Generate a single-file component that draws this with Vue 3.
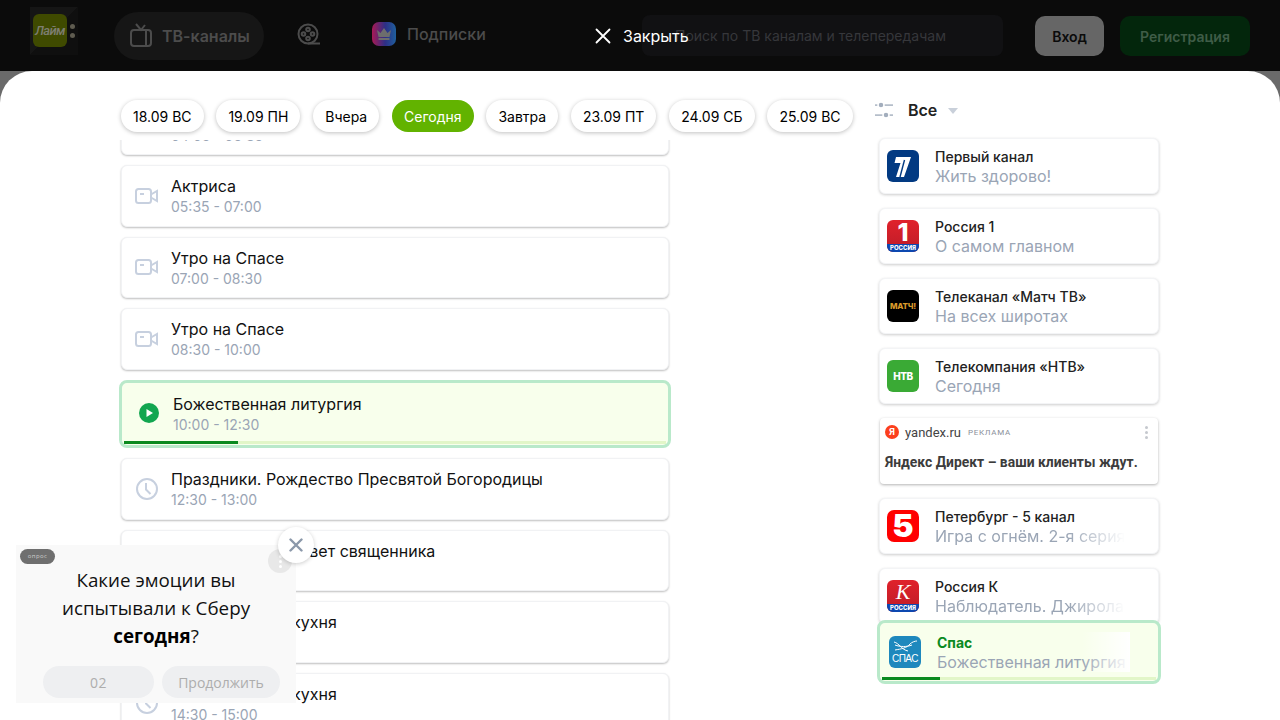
<template>
  <div class="page">
    <header class="topbar">
      <div class="logo">
        <div class="logo-mark">Лайм</div>
        <div class="logo-dots"><i></i><i></i></div>
      </div>
      <nav class="nav">
        <a class="nav-item nav-active">
          <svg width="22" height="26" viewBox="0 0 22 26" fill="none" stroke="#4c4c4c" stroke-width="2">
            <rect x="1" y="7" width="20" height="16" rx="3" />
            <path d="M6 1l5 6 4-5" />
            <path d="M16 7v16" />
          </svg>
          <span>ТВ-каналы</span>
        </a>
        <a class="nav-reel">
          <svg width="24" height="24" viewBox="0 0 24 24" fill="none" stroke="#4c4c4c" stroke-width="2">
            <circle cx="11" cy="11" r="9.5" />
            <circle cx="11" cy="6.5" r="1.8" />
            <circle cx="11" cy="15.5" r="1.8" />
            <circle cx="6.5" cy="11" r="1.8" />
            <circle cx="15.5" cy="11" r="1.8" />
            <path d="M11 20.5h12" />
          </svg>
        </a>
        <a class="nav-subs">
          <span class="subs-icon">
            <svg width="16" height="14" viewBox="0 0 16 14" fill="#6d6d6d">
              <path d="M1 3l3.5 3L8 1l3.5 5L15 3l-1.5 7h-11z" />
              <rect x="2.5" y="11" width="11" height="2" />
            </svg>
          </span>
          <span>Подписки</span>
        </a>
      </nav>
      <div class="search">Поиск по ТВ каналам и телепередачам</div>
      <button class="btn-login">Вход</button>
      <button class="btn-register">Регистрация</button>
    </header>

    <div class="close-top">
      <svg width="16" height="16" viewBox="0 0 16 16" stroke="#fff" stroke-width="1.8" stroke-linecap="round">
        <path d="M1.5 1.5l13 13M14.5 1.5l-13 13" />
      </svg>
      <span>Закрыть</span>
    </div>

    <main class="sheet">
      <section class="schedule">
        <div class="dates">
          <button v-for="d in dates" :key="d" class="date" :class="{ today: d === 'Сегодня' }">{{ d }}</button>
        </div>
        <div class="programs">
          <div class="programs-inner">
            <div v-for="p in programs" :key="p.time" class="program" :class="{ live: p.live }">
              <svg v-if="p.live" width="20" height="20" viewBox="0 0 20 20">
                <circle cx="10" cy="10" r="10" fill="#12a650" />
                <path d="M7.5 6l6.5 4-6.5 4z" fill="#fff" />
              </svg>
              <svg v-else-if="p.clock" width="24" height="24" viewBox="0 0 24 24" fill="none" stroke="#c7d0df" stroke-width="2">
                <circle cx="12" cy="12" r="10" />
                <path d="M11 6v6.5l4.5 4.5" />
              </svg>
              <svg v-else width="24" height="24" viewBox="0 0 24 24" fill="none" stroke="#c7d0df" stroke-width="2">
                <rect x="1" y="5" width="15" height="14" rx="2.5" />
                <path d="M5 10h4" />
                <path d="M16 10.5l6-3.5v10l-6-3.5" />
              </svg>
              <div class="program-text">
                <div class="program-title">{{ p.title }}</div>
                <div class="program-time">{{ p.time }}</div>
              </div>
              <div v-if="p.live" class="progress"><div class="progress-done" style="width: 21%"></div></div>
            </div>
          </div>
        </div>
      </section>

      <aside class="channels">
        <div class="filter">
          <svg width="18" height="16" viewBox="0 0 18 16" fill="#a3aebd">
            <rect x="0" y="2.4" width="18" height="1.4" />
            <rect x="0" y="12.4" width="18" height="1.4" />
            <circle cx="6" cy="3" r="3" stroke="#fff" stroke-width="1.5" />
            <circle cx="11" cy="13" r="3" stroke="#fff" stroke-width="1.5" />
          </svg>
          <span class="filter-label">Все</span>
          <span class="filter-caret"></span>
        </div>

        <div v-for="c in channels" :key="c.name" class="channel" :class="{ ad: c.ad }">
          <template v-if="c.ad">
            <div class="ad-head">
              <span class="ya-icon">Я</span>
              <span class="ad-host">yandex.ru</span>
              <span class="ad-tag">РЕКЛАМА</span>
              <span class="ad-more"><i></i><i></i><i></i></span>
            </div>
            <div class="ad-text">Яндекс Директ – ваши клиенты ждут.</div>
          </template>
          <template v-else>
            <div class="channel-logo" :class="c.logo">
              <svg v-if="c.logo === 'first'" width="32" height="32" viewBox="0 0 32 32">
                <path d="M9 7h15l-7 20H9l4.5-14H7.5z" fill="#fff" />
                <path d="M17.5 10L13 27" stroke="#023a82" stroke-width="1.4" fill="none" />
              </svg>
              <span v-if="c.logo === 'russia1'" class="logo-big">1</span>
              <span v-if="c.logo === 'kultura'" class="logo-k">К</span>
              <span v-if="c.logo === 'match'" class="logo-match">МАТЧ!</span>
              <span v-if="c.logo === 'ntv'" class="logo-ntv">НТВ</span>
              <span v-if="c.logo === 'five'" class="logo-five">5</span>
              <span v-if="c.logo === 'russia1' || c.logo === 'kultura'" class="logo-strip">РОССИЯ</span>
            </div>
            <div class="channel-text">
              <div class="channel-name">{{ c.name }}</div>
              <div class="channel-sub" :class="{ fade: c.fade }">{{ c.sub }}</div>
            </div>
          </template>
        </div>

        <div class="channel channel-live">
          <div class="channel-logo spas">
            <svg width="26" height="13" viewBox="0 0 26 13" fill="none" stroke="#fff" stroke-width="1">
              <path d="M2 2c5 1 8 8 14 9" />
              <path d="M3 10c6-1 12-2 15-6 2-2 5-3 7-3" />
              <path d="M3 5c5 2 12 2 17 0" />
            </svg>
            <span>СПАС</span>
          </div>
          <div class="channel-text">
            <div class="channel-name">Спас</div>
            <div class="channel-sub">Божественная литургия</div>
          </div>
          <div class="live-fade"></div>
          <div class="progress"><div class="progress-done" style="width: 21%"></div></div>
        </div>
      </aside>
    </main>

    <div class="poll">
      <span class="poll-badge">опрос</span>
      <span class="poll-menu"><i></i><i></i><i></i></span>
      <div class="poll-title">Какие эмоции вы<br />испытывали к Сберу<br /><b>сегодня</b>?</div>
      <div class="poll-actions">
        <button class="poll-btn poll-count">02</button>
        <button class="poll-btn poll-next">Продолжить</button>
      </div>
      <button class="poll-close">
        <svg width="14" height="14" viewBox="0 0 14 14" stroke="#8b98aa" stroke-width="2.4" stroke-linecap="round">
          <path d="M1.5 1.5l11 11M12.5 1.5l-11 11" />
        </svg>
      </button>
    </div>
  </div>
</template>

<script setup>
const dates = ['18.09 ВС', '19.09 ПН', 'Вчера', 'Сегодня', 'Завтра', '23.09 ПТ', '24.09 СБ', '25.09 ВС']

const programs = [
  { title: 'Утро на Спасе', time: '04:05 - 05:35' },
  { title: 'Актриса', time: '05:35 - 07:00' },
  { title: 'Утро на Спасе', time: '07:00 - 08:30' },
  { title: 'Утро на Спасе', time: '08:30 - 10:00' },
  { title: 'Божественная литургия', time: '10:00 - 12:30', live: true },
  { title: 'Праздники. Рождество Пресвятой Богородицы', time: '12:30 - 13:00', clock: true },
  { title: 'Православный ответ священника', time: '13:00 - 14:00', clock: true },
  { title: 'Монастырская кухня', time: '14:00 - 14:30', clock: true },
  { title: 'Монастырская кухня', time: '14:30 - 15:00', clock: true }
]

const channels = [
  { name: 'Первый канал', sub: 'Жить здорово!', logo: 'first' },
  { name: 'Россия 1', sub: 'О самом главном', logo: 'russia1' },
  { name: 'Телеканал «Матч ТВ»', sub: 'На всех широтах', logo: 'match' },
  { name: 'Телекомпания «НТВ»', sub: 'Сегодня', logo: 'ntv' },
  { name: 'ad', ad: true },
  { name: 'Петербург - 5 канал', sub: 'Игра с огнём. 2-я серия', logo: 'five', fade: true },
  { name: 'Россия К', sub: 'Наблюдатель. Джироламо Фрескобальди', logo: 'kultura', fade: true }
]
</script>

<style>
html,
body {
  margin: 0;
  overflow: hidden;
}
</style>

<style scoped>
.page {
  position: relative;
  width: 1280px;
  height: 720px;
  overflow: hidden;
  background: #6a6a6a;
  font-family: Inter, "Noto Sans", sans-serif;
  color: #000;
}

button {
  border: none;
  font-family: inherit;
  padding: 0;
}

/* header */
.topbar {
  height: 71px;
  box-sizing: border-box;
  padding: 7px 30px 0;
  background: #0b0b0b;
  display: flex;
  align-items: flex-start;
}

.logo {
  width: 48px;
  height: 48px;
  margin-right: 36px;
  padding: 7px 0 0 3px;
  box-sizing: border-box;
  background: linear-gradient(135deg, #151515 50%, #0f0f0f 50%);
  display: flex;
  gap: 3px;
}

.logo-mark {
  width: 34px;
  height: 33px;
  border-radius: 6px;
  background: #3f4a00;
  color: #7d7d70;
  font-family: Roboto, sans-serif;
  font-size: 13px;
  font-style: italic;
  font-weight: 500;
  line-height: 33px;
  text-align: center;
  letter-spacing: -0.6px;
}

.logo-dots {
  display: flex;
  flex-direction: column;
  gap: 4px;
  padding-top: 10px;
}

.logo-dots i {
  width: 5px;
  height: 5px;
  border-radius: 50%;
  background: #5f5c50;
}

.nav {
  display: flex;
  align-items: center;
  height: 48px;
  margin-top: 5px;
  color: #4c4c4c;
  font-size: 16px;
}

.nav-item {
  display: flex;
  align-items: center;
  gap: 10px;
  width: 150px;
  height: 48px;
  box-sizing: border-box;
  padding-left: 16px;
  border-radius: 24px;
  background: #161616;
  font-weight: 600;
}

.nav-reel {
  display: flex;
  margin-left: 33px;
  margin-top: -2px;
}

.nav-subs {
  display: flex;
  align-items: center;
  gap: 11px;
  margin-left: 51px;
  margin-top: -4px;
  font-weight: 500;
}

.subs-icon {
  width: 24px;
  height: 24px;
  border-radius: 7px;
  background: linear-gradient(90deg, #a81a55, #2d2f86 55%, #1f5f9c);
  display: flex;
  align-items: center;
  justify-content: center;
}

.search {
  position: absolute;
  left: 642px;
  top: 15px;
  width: 361px;
  height: 41px;
  box-sizing: border-box;
  padding-left: 33px;
  border-radius: 8px;
  background: #111113;
  color: #36373b;
  font-size: 14px;
  line-height: 41px;
}

.btn-login,
.btn-register {
  position: absolute;
  top: 16px;
  height: 40px;
  border-radius: 10px;
  font-size: 14px;
  font-weight: 600;
}

.btn-login {
  left: 1035px;
  width: 69px;
  background: #666;
  color: #0b0b0b;
}

.btn-register {
  left: 1120px;
  width: 130px;
  background: #03260c;
  color: #3f5c47;
}

.close-top {
  position: absolute;
  left: 595px;
  top: 26px;
  display: flex;
  align-items: center;
  gap: 12px;
  color: #fff;
  font-size: 16px;
  line-height: 20px;
}

/* sheet */
.sheet {
  height: 649px;
  box-sizing: border-box;
  padding: 29px 120px 0 121px;
  background: #fff;
  border-radius: 32px 32px 0 0;
  display: flex;
  gap: 210px;
}

.schedule {
  width: 548px;
  flex: none;
}

.dates {
  display: flex;
  gap: 12.85px;
  width: 760px;
}

.date {
  height: 32px;
  padding: 0 12px;
  border-radius: 16px;
  background: #fff;
  box-shadow: 0 1px 4px rgba(0, 0, 0, 0.25);
  font-size: 14px;
  color: #000;
  white-space: nowrap;
}

.date.today {
  background: #62b300;
  color: #fff;
  box-shadow: none;
}

.programs {
  height: 580px;
  margin: 8px -6px 0;
  padding: 0 6px;
  overflow: hidden;
}

.programs-inner {
  margin-top: -46.5px;
  display: flex;
  flex-direction: column;
  gap: 10px;
}

.program {
  position: relative;
  height: 61.5px;
  flex: none;
  box-sizing: border-box;
  border: 1px solid #f1f2f4;
  border-radius: 6px;
  padding-left: 13px;
  background: #fff;
  box-shadow: 0 1px 2px rgba(0, 0, 0, 0.25);
  display: flex;
  align-items: center;
  gap: 12px;
}

.program-title {
  font-size: 16px;
  line-height: 22px;
  color: #111;
}

.program-time {
  margin-top: 1px;
  font-size: 14px;
  line-height: 18px;
  color: #9aa5b5;
}

.program.live {
  height: 68.5px;
  margin: 0 -2px;
  border: 3px solid #b9e9ca;
  border-radius: 8px;
  padding-left: 17px;
  padding-bottom: 1px;
  background: #f8ffec;
  box-shadow: none;
  gap: 14px;
}

.progress {
  position: absolute;
  left: 2px;
  right: 2px;
  bottom: 1px;
  height: 3px;
  background: #e2f6c8;
}

.progress-done {
  height: 100%;
  background: #0a8a1f;
}

/* channels */
.channels {
  position: relative;
  width: 280px;
  flex: none;
  height: 100%;
}

.filter {
  height: 18px;
  margin: 1px 0 0 -4px;
  display: flex;
  align-items: center;
}

.filter-label {
  margin-left: 15px;
  font-size: 16px;
  font-weight: 600;
  color: #222;
}

.filter-caret {
  width: 0;
  height: 0;
  margin: 2px 0 0 11px;
  border-left: 5px solid transparent;
  border-right: 5px solid transparent;
  border-top: 6px solid #c9d0da;
}

.channel {
  position: relative;
  height: 56px;
  box-sizing: border-box;
  margin-top: 14px;
  padding-left: 7px;
  border: 1px solid #f3f4f6;
  border-radius: 6px;
  background: #fff;
  box-shadow: 0 1px 3px rgba(0, 0, 0, 0.2);
  display: flex;
  align-items: center;
  gap: 16px;
}

.filter + .channel {
  margin-top: 19px;
}

.channel-logo {
  position: relative;
  width: 32px;
  height: 32px;
  flex: none;
  border-radius: 6px;
  overflow: hidden;
  display: flex;
  align-items: center;
  justify-content: center;
  color: #fff;
}

.channel-logo.first {
  background: #023a82;
}

.channel-logo.russia1,
.channel-logo.kultura {
  background: linear-gradient(#e0222b, #bd1c28);
  padding-bottom: 8px;
  box-sizing: border-box;
}

.logo-big {
  font-size: 25px;
  font-weight: 800;
  line-height: 24px;
}

.logo-k {
  font-family: "Liberation Serif", serif;
  font-style: italic;
  font-size: 22px;
  line-height: 24px;
}

.logo-strip {
  position: absolute;
  left: 0;
  right: 0;
  bottom: 0;
  height: 8px;
  background: #0d48b0;
  font-size: 6px;
  font-weight: 800;
  line-height: 8px;
  text-align: center;
}

.channel-logo.match {
  background: #000;
}

.logo-match {
  font-size: 8px;
  font-weight: 800;
  color: #d99a2b;
  letter-spacing: -0.2px;
}

.channel-logo.ntv {
  background: #3aaa35;
}

.logo-ntv {
  font-size: 10px;
  font-weight: 800;
  letter-spacing: -0.5px;
}

.channel-logo.five {
  background: #ff0000;
  border-radius: 7px;
}

.logo-five {
  font-size: 32px;
  font-weight: 900;
  line-height: 32px;
}

.channel-logo.spas {
  background: #1e88bd;
  flex-direction: column;
  font-family: "Liberation Sans", sans-serif;
  font-size: 10px;
  line-height: 10px;
  letter-spacing: -0.5px;
  gap: 1px;
}

.channel-text {
  min-width: 0;
  width: 190px;
  flex: none;
  white-space: nowrap;
}

.channel-name {
  font-size: 14px;
  font-weight: 500;
  line-height: 20px;
  padding-top: 1px;
  color: #222;
}

.channel-sub {
  font-size: 16px;
  line-height: 19px;
  color: #9aa5b5;
  overflow: hidden;
}

.channel-sub.fade {
  -webkit-mask-image: linear-gradient(90deg, #000 70%, transparent 100%);
  mask-image: linear-gradient(90deg, #000 70%, transparent 100%);
}

.channel.ad {
  display: block;
  height: 66px;
  margin: 14px 1px;
  padding: 0;
  border: none;
  border-radius: 4px;
  box-shadow: 0 1px 3px rgba(0, 0, 0, 0.3);
}

.ad + .channel {
  margin-top: 14px;
}

.ad-head {
  display: flex;
  align-items: center;
  height: 28px;
  padding-left: 5px;
}

.ya-icon {
  width: 14px;
  height: 14px;
  border-radius: 50%;
  background: #fc3f1d;
  color: #fff;
  font-size: 9px;
  font-weight: 700;
  line-height: 14px;
  text-align: center;
}

.ad-host {
  margin-left: 6px;
  font-family: Roboto, sans-serif;
  font-size: 13px;
  color: #444;
}

.ad-tag {
  margin-left: 7px;
  font-family: Roboto, sans-serif;
  font-size: 8px;
  letter-spacing: 0.7px;
  color: #8a8f9a;
}

.ad-more {
  margin-left: auto;
  margin-right: 10px;
  display: flex;
  flex-direction: column;
  gap: 2px;
}

.ad-more i {
  width: 3px;
  height: 3px;
  border-radius: 50%;
  background: #c5c8ce;
}

.ad-text {
  margin-top: 7px;
  padding-left: 5px;
  font-family: Roboto, sans-serif;
  font-size: 13.9px;
  font-weight: 700;
  line-height: 18px;
  color: #3c3c3c;
  white-space: nowrap;
}

.channel-live {
  position: absolute;
  left: -2px;
  top: 520px;
  width: 284px;
  height: 64px;
  margin: 0;
  padding-left: 9px;
  border: 3px solid #b9e9ca;
  border-radius: 8px;
  background: #f8ffec;
  box-shadow: none;
}

.channel-live .channel-name {
  color: #0a8a1f;
  font-weight: 700;
}

.live-fade {
  position: absolute;
  left: 202px;
  top: 9px;
  width: 48px;
  height: 40px;
  background: linear-gradient(90deg, rgba(255, 255, 255, 0), #fff);
}

/* poll */
.poll {
  position: absolute;
  left: 16px;
  top: 545px;
  width: 280px;
  height: 158px;
  background: #f9f9f9;
  font-family: "Open Sans", "Noto Sans", sans-serif;
}

.poll-badge {
  position: absolute;
  left: 4px;
  top: 4px;
  width: 35px;
  height: 15px;
  border-radius: 8px;
  background: #6f6f6f;
  color: #ccc;
  font-size: 6px;
  line-height: 15px;
  text-align: center;
  letter-spacing: 0.4px;
}

.poll-menu {
  position: absolute;
  left: 252px;
  top: 4px;
  width: 24px;
  height: 24px;
  border-radius: 50%;
  background: #e8e8e8;
  display: flex;
  flex-direction: column;
  align-items: center;
  justify-content: center;
  gap: 2px;
}

.poll-menu i {
  width: 3px;
  height: 3px;
  border-radius: 50%;
  background: #fff;
}

.poll-title {
  padding-top: 21px;
  font-size: 18.8px;
  line-height: 28px;
  text-align: center;
  color: #111;
}

.poll-title b {
  color: #000;
}

.poll-actions {
  display: flex;
  gap: 8px;
  margin: 16px 16px 0 27px;
}

.poll-btn {
  height: 32px;
  border-radius: 16px;
  background: #eeeff1;
  color: #adadad;
  font-family: inherit;
  font-size: 14px;
}

.poll-count {
  width: 111px;
  letter-spacing: 0.6px;
}

.poll-next {
  width: 118px;
}

.poll-close {
  position: absolute;
  left: 262px;
  top: -18px;
  width: 36px;
  height: 36px;
  border-radius: 50%;
  background: #fff;
  box-shadow: 0 1px 4px rgba(0, 0, 0, 0.2);
  display: flex;
  align-items: center;
  justify-content: center;
}
</style>
